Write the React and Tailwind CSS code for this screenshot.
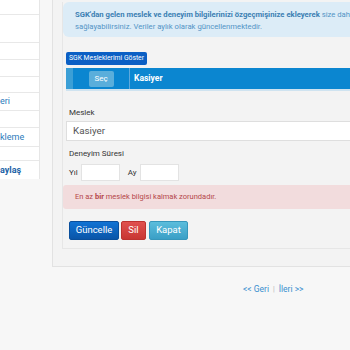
export default function App() {
  const font = { fontFamily: 'Roboto, "Noto Sans", sans-serif' };
  return (
    <div className="w-[350px] h-[350px] overflow-hidden bg-[#f7f7f7] flex" style={font}>
      {/* Sidebar */}
      <div className="w-[40px] shrink-0">
        <div className="bg-white border-r border-[#e6e6e6] text-[9px] leading-none">
          <div className="h-[15px] border-b border-[#e8e8e8]" />
          <div className="h-[28px] border-b border-[#e8e8e8]" />
          <div className="h-[17px] border-b border-[#e8e8e8]" />
          <div className="h-[17px] border-b border-[#e8e8e8]" />
          <div className="h-[16px] border-b border-[#e8e8e8]" />
          <div className="h-[18px] border-b border-[#e8e8e8] flex items-center text-[#2b7bbb]">eri</div>
          <div className="h-[17px] border-b border-[#e8e8e8]" />
          <div className="h-[19px] border-b border-[#e8e8e8] flex items-center text-[#2b7bbb]">kleme</div>
          <div className="h-[14px] border-b border-[#e8e8e8]" />
          <div className="h-[18px] flex items-center font-bold text-[#1b63a6]">aylaş</div>
        </div>
      </div>

      {/* Main */}
      <div className="ml-[12px] flex-1 flex flex-col">
        <div className="bg-[#f3f3f3] border-l border-b border-[#e2e2e2] pl-[9px] pb-[17px]">
          <div className="border-l border-b border-[#e6e6e6] pb-[8px]">
            {/* info alert */}
            <div className="mt-[2px] h-[35px] bg-[#dcecf7] rounded-l-[6px] pl-[12px] pt-[7px] text-[7.7px] leading-[12px] text-[#5394c6] whitespace-nowrap overflow-hidden">
              <div><span className="font-bold text-[#3b7fb3]">SGK'dan gelen meslek ve deneyim bilgilerinizi özgeçmişinize ekleyerek</span> size daha</div>
              <div>sağlayabilirsiniz. Veriler aylık olarak güncellenmektedir.</div>
            </div>

            <div className="pl-[3px]">
              <button className="mt-[15px] h-[13px] px-[3px] bg-[#0b5fc4] rounded-[2px] text-white text-[6.8px] leading-none flex items-center">
                SGK Mesleklerimi Göster
              </button>

              {/* table header */}
              <div className="mt-[3px] h-[21px] bg-[#0b86d0] flex items-center border-b-2 border-[#cfe3f0] box-content">
                <div className="w-[7px] h-full bg-[#3b9fd6]" />
                <div className="w-[57px] h-full flex items-center justify-center border-r border-[#5fa9dc]">
                  <div className="w-[25px] h-[16px] bg-[#5aaedb] rounded-[2px] text-white text-[8px] flex items-center justify-center">Seç</div>
                </div>
                <div className="pl-[4px] text-white font-bold text-[8.5px]">Kasiyer</div>
              </div>

              {/* form */}
              <div className="mt-[16px] pl-[3px] text-[8px] leading-[12px] text-[#333]">Meslek</div>
              <div className="mt-[2px] h-[20px] bg-white border border-[#dedede] pl-[6px] flex items-center text-[9.8px] text-[#555]">Kasiyer</div>
              <div className="mt-[7px] pl-[3px] text-[8px] leading-[12px] text-[#333]">Deneyim Süresi</div>
              <div className="mt-[4px] flex items-center pl-[3px] text-[8px] text-[#333]">
                <span>Yıl</span>
                <div className="ml-[3px] w-[39px] h-[17px] bg-white border border-[#e3e3e3]" />
                <span className="ml-[8px]">Ay</span>
                <div className="ml-[3px] w-[39px] h-[17px] bg-white border border-[#e3e3e3]" />
              </div>
            </div>

            {/* danger alert */}
            <div className="mt-[4px] h-[24px] bg-[#f2dcdd] rounded-l-[3px] pl-[12px] flex items-center text-[7.5px] text-[#b5474a]">
              <span>En az <b className="font-bold">bir</b> meslek bilgisi kalmak zorundadır.</span>
            </div>

            {/* buttons */}
            <div className="mt-[12px] pl-[6px] flex gap-[2px] text-[9.5px] text-white">
              <button className="w-[50px] h-[19px] rounded-[2px] bg-gradient-to-b from-[#1173d4] to-[#0a55a8] border border-[#0a4f9c] flex items-center justify-center">Güncelle</button>
              <button className="w-[25px] h-[19px] rounded-[2px] bg-gradient-to-b from-[#e0514e] to-[#c83633] border border-[#bd3330] flex items-center justify-center">Sil</button>
              <button className="ml-[1px] w-[39px] h-[19px] rounded-[2px] bg-gradient-to-b from-[#5bbddc] to-[#3a9fc6] border border-[#3696bb] flex items-center justify-center">Kapat</button>
            </div>
          </div>
        </div>

        {/* pagination */}
        <div className="mt-[16px] pl-[191px] flex items-center text-[8.5px] text-[#3a8fcf]">
          <span>&lt;&lt; Geri</span>
          <span className="mx-[4px] text-[#b0b0b0] text-[7px]">|</span>
          <span>İleri &gt;&gt;</span>
        </div>
      </div>
    </div>
  );
}
